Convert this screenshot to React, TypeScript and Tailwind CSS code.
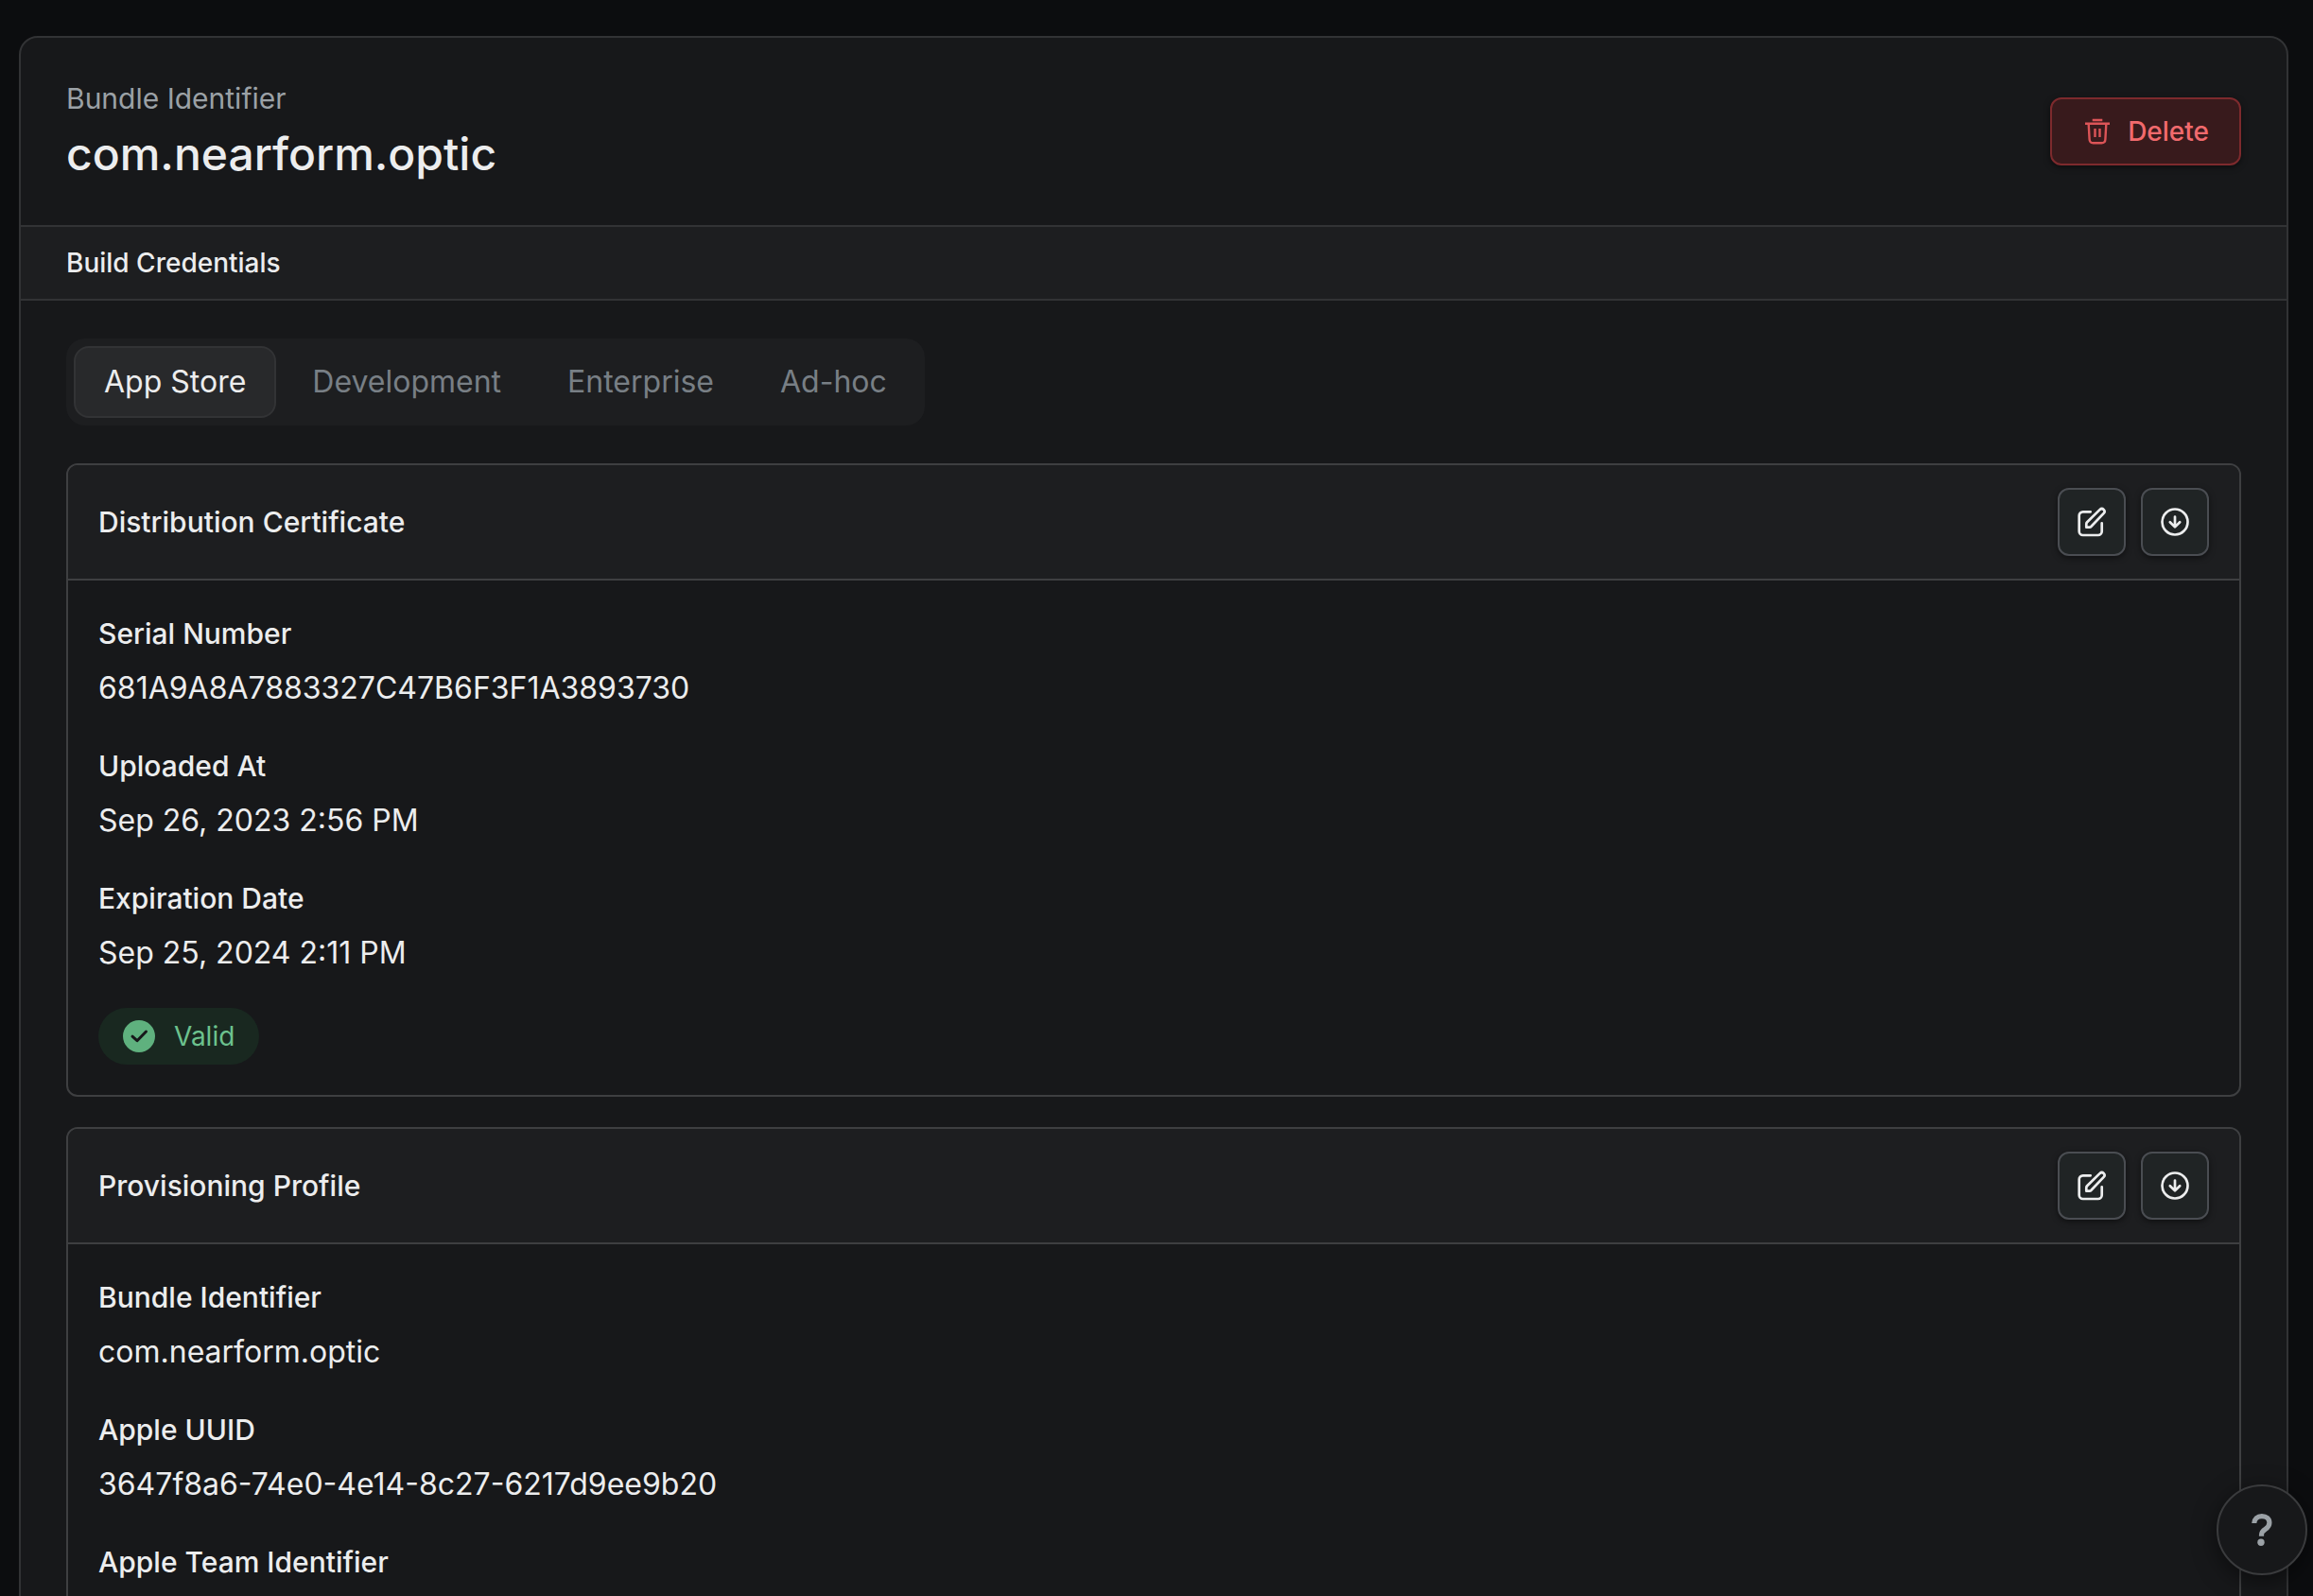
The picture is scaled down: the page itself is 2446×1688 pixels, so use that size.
import { useState, type ReactNode } from "react";

function TrashIcon() {
  return (
    <svg className="size-8 shrink-0" viewBox="0 0 32 32" fill="none" stroke="#dc5457" strokeWidth="2.4" strokeLinejoin="round" aria-hidden="true">
      <path d="M3 7.700h26M10.700 4h10.600M6.700 8l.9 16.300c.1 2.700 1.400 4 4 4h8.800c2.600 0 3.900-1.300 4-4L25.300 8M13.500 13v9M18.500 13v9" />
    </svg>
  );
}

function EditIcon() {
  return (
    <svg className="size-8" viewBox="0 0 32 32" fill="none" stroke="currentColor" strokeWidth="2.700" strokeLinecap="round" strokeLinejoin="round" aria-hidden="true">
      <path d="M14.700 5.300H6.700a4 4 0 0 0-4 4V26a4 4 0 0 0 4 4h16a4 4 0 0 0 4-4v-8.700" />
      <path d="M10.300 21.700v-3.500c0-.7.300-1.400.8-1.900L24.700 2.900a2.830 2.830 0 0 1 4 4L15.500 20.800c-.5.600-1.200.9-1.900.9z" />
    </svg>
  );
}

function DownloadIcon() {
  return (
    <svg className="size-8" viewBox="0 0 32 32" fill="none" stroke="currentColor" strokeWidth="2.700" strokeLinecap="round" strokeLinejoin="round" aria-hidden="true">
      <circle cx="16" cy="16" r="13.500" />
      <path d="M16 10.600v10.700M10.800 16.200 16 21.400l5.200-5.200" />
    </svg>
  );
}

function ValidIcon() {
  return (
    <svg className="size-[34px]" viewBox="0 0 34 34" fill="none" aria-hidden="true">
      <circle cx="17" cy="17" r="17" fill="#5fb17e" />
      <path d="m10 17.200 5 4.500 9.500-9.700" stroke="#17181a" strokeWidth="3" strokeLinecap="round" strokeLinejoin="round" />
    </svg>
  );
}

function HelpIcon() {
  return (
    <svg className="h-[34px] w-[22px]" viewBox="0 0 22 34" fill="none" aria-hidden="true">
      <path d="M2.800 10C3 5.400 6 2.600 10.900 2.600c4.900 0 8 2.800 8 6.900 0 3-1.500 5-4.200 6.700-2.900 1.800-4.200 3.400-4.200 6.500v1" stroke="#9ba1a6" strokeWidth="5.200" />
      <circle cx="10" cy="30.200" r="3.700" fill="#9ba1a6" />
    </svg>
  );
}

function IconButton({ label, children }: { label: string; children: ReactNode }) {
  return (
    <button
      type="button"
      aria-label={label}
      className="flex size-[72px] items-center justify-center rounded-xl border-2 border-[#4a4d52] bg-[#202425] text-[#ecedee] shadow-[0_2px_6px_rgba(0,0,0,0.5)]"
    >
      {children}
    </button>
  );
}

type Field = { label: string; value?: string };

function Panel({ title, fields, children }: { title: string; fields: Field[]; children?: ReactNode }) {
  return (
    <section className="overflow-hidden rounded-xl border-2 border-[#3e3f41] bg-[#17181a]">
      <div className="flex items-center justify-between border-b-2 border-[#3e3f41] bg-[#1d1e20] px-8 py-6">
        <h3 className="text-[30px] leading-12 font-medium">{title}</h3>
        <div className="flex gap-4">
          <IconButton label={`Edit ${title}`}>
            <EditIcon />
          </IconButton>
          <IconButton label={`Download ${title}`}>
            <DownloadIcon />
          </IconButton>
        </div>
      </div>
      <div className="flex flex-col items-start gap-8 p-8">
        <dl className="flex flex-col gap-8">
          {fields.map((field) => (
            <div key={field.label} className="flex flex-col gap-2">
              <dt className="text-[30px] leading-12 font-medium">{field.label}</dt>
              {field.value && <dd className="text-[32px] leading-[52px]">{field.value}</dd>}
            </div>
          ))}
        </dl>
        {children}
      </div>
    </section>
  );
}

const tabs = ["App Store", "Development", "Enterprise", "Ad-hoc"];

export default function App() {
  const [active, setActive] = useState("App Store");

  return (
    <div className="h-screen overflow-hidden bg-[#0c0d0f] px-5 pt-[38px] font-['Inter',sans-serif] text-[#ecedee]">
      <main className="mr-1.5 overflow-hidden rounded-[20px] border-2 border-[#323335] bg-[#17181a]">
        <header className="flex items-center justify-between px-12 py-10">
          <div className="flex flex-col">
            <p className="text-[30px] leading-12 text-[#9ba1a6]">Bundle Identifier</p>
            <h1 className="text-5xl leading-[70px] font-medium">com.nearform.optic</h1>
          </div>
          <button
            type="button"
            className="flex h-[72px] items-center gap-4 rounded-xl border-2 border-[#7d2a2d] bg-[#381a1c] px-8 text-[28px] font-medium text-[#f16a6d] shadow-[0_2px_6px_rgba(0,0,0,0.5)]"
          >
            <TrashIcon />
            Delete
          </button>
        </header>

        <h2 className="border-y-2 border-[#323335] bg-[#1d1e20] px-12 py-4 text-[28px] leading-11 font-medium">Build Credentials</h2>

        <div className="flex flex-col items-start px-12 pt-10 pb-12">
          <div role="tablist" className="flex gap-1.5 rounded-[20px] bg-[#1d1e20] p-2">
            {tabs.map((tab) => (
              <button
                key={tab}
                type="button"
                role="tab"
                aria-selected={tab === active}
                onClick={() => setActive(tab)}
                className={
                  tab === active
                    ? "h-[76px] rounded-2xl border-2 border-[#323335] bg-[#28292b] px-[30px] text-[32px] text-[#ecedee]"
                    : "h-[76px] rounded-2xl border-2 border-transparent px-[30px] text-[32px] text-[#787f85]"
                }
              >
                {tab}
              </button>
            ))}
          </div>

          <div className="mt-10 flex w-full flex-col gap-8">
            <Panel
              title="Distribution Certificate"
              fields={[
                { label: "Serial Number", value: "681A9A8A7883327C47B6F3F1A3893730" },
                { label: "Uploaded At", value: "Sep 26, 2023 2:56 PM" },
                { label: "Expiration Date", value: "Sep 25, 2024 2:11 PM" },
              ]}
            >
              <span className="flex h-[60px] items-center gap-5 rounded-full bg-[#192820] px-[26px] text-[28px] text-[#6cc28e]">
                <ValidIcon />
                Valid
              </span>
            </Panel>
            <Panel
              title="Provisioning Profile"
              fields={[
                { label: "Bundle Identifier", value: "com.nearform.optic" },
                { label: "Apple UUID", value: "3647f8a6-74e0-4e14-8c27-6217d9ee9b20" },
                { label: "Apple Team Identifier" },
              ]}
            />
          </div>
        </div>
      </main>

      <button
        type="button"
        aria-label="Help"
        className="fixed right-1.5 bottom-[22px] flex size-24 items-center justify-center rounded-full border-2 border-[#3a3b3d] bg-[#17181a] shadow-[0_6px_24px_rgba(0,0,0,0.5)]"
      >
        <HelpIcon />
      </button>
    </div>
  );
}
